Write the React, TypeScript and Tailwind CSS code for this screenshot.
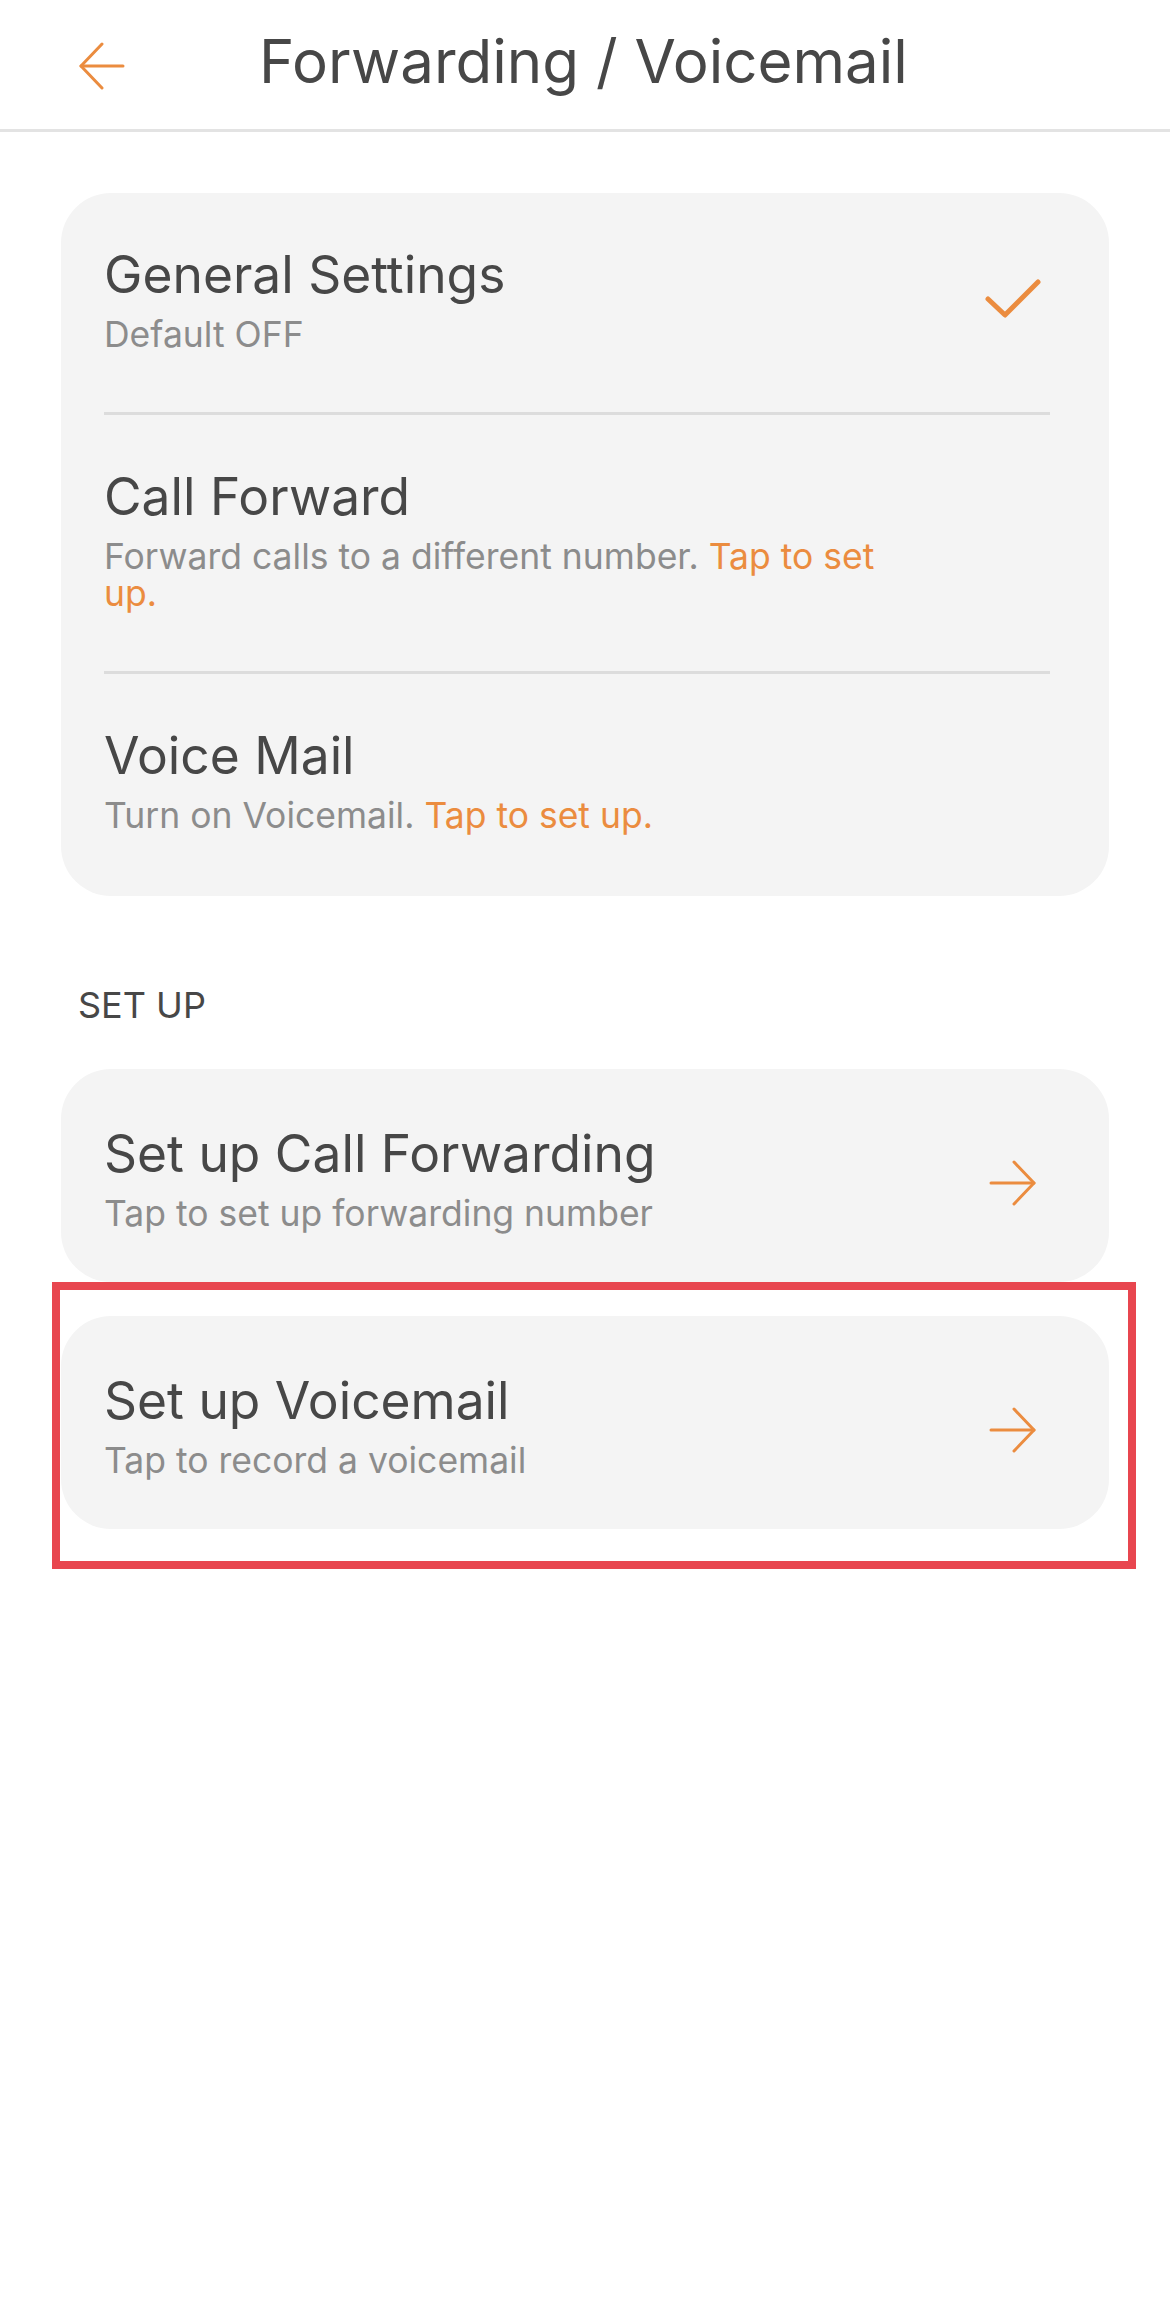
const ORANGE = '#EB8C3F';

function BackArrow() {
  return (
    <svg width="48" height="48" viewBox="0 0 48 48" fill="none" stroke={ORANGE} strokeWidth="3" strokeLinecap="round" strokeLinejoin="round">
      <path d="M3 24H45" />
      <path d="M24 2L3 24L24 46" />
    </svg>
  );
}

function ForwardArrow() {
  return (
    <svg width="48" height="46" viewBox="0 0 48 46" fill="none" stroke={ORANGE} strokeWidth="3" strokeLinecap="round" strokeLinejoin="round">
      <path d="M2 23H45" />
      <path d="M25 2L45 23L25 44" />
    </svg>
  );
}

function Check() {
  return (
    <svg width="58" height="42" viewBox="0 0 58 42" fill="none" stroke={ORANGE} strokeWidth="5" strokeLinecap="round" strokeLinejoin="round">
      <path d="M4 21L21 37L54 4" />
    </svg>
  );
}

type Row = {
  title: string;
  text: string;
  action?: string;
  checked?: boolean;
};

const settings: Row[] = [
  { title: 'General Settings', text: 'Default OFF', checked: true },
  { title: 'Call Forward', text: 'Forward calls to a different number.', action: 'Tap to set up.' },
  { title: 'Voice Mail', text: 'Turn on Voicemail.', action: 'Tap to set up.' },
];

function SettingRow({ row, last }: { row: Row; last: boolean }) {
  return (
    <div className="pl-[43px] pr-[59px]">
      <div className={`flex items-center justify-between pt-[51px] pb-[59px] ${last ? '' : 'border-b-[3px] border-[#dcdcdc]'}`}>
        <div className="max-w-[800px]">
          <div className="text-[51.5px] leading-[60px] text-[#474747]">{row.title}</div>
          <div className="mt-[12px] text-[35.5px] leading-[37px] text-[#8c8c8c]">
            {row.text}
            {row.action && <span className="text-[#EB8C3F]"> {row.action}</span>}
          </div>
        </div>
        {row.checked && (
          <div className="mr-[8px]">
            <Check />
          </div>
        )}
      </div>
    </div>
  );
}

function SetupCard({ title, text }: { title: string; text: string }) {
  return (
    <div className="flex items-center justify-between rounded-[50px] bg-[#f4f4f4] pl-[43px] pr-[72px] pt-[54px] pb-[50px]">
      <div>
        <div className="text-[51.5px] leading-[60px] text-[#474747]">{title}</div>
        <div className="mt-[12px] text-[35.5px] leading-[37px] text-[#8c8c8c]">{text}</div>
      </div>
      <div className="pt-[10px]">
        <ForwardArrow />
      </div>
    </div>
  );
}

export default function App() {
  return (
    <div className="min-h-[2322px] w-full bg-white font-['Inter',sans-serif]">
      {/* Top bar */}
      <header className="flex h-[132px] items-start border-b-[3px] border-[#e3e3e3] pl-[78px] pt-[32px]">
        <div className="mt-[10px]">
          <BackArrow />
        </div>
        <h1 className="ml-[133px] text-[60px] leading-[59px] font-normal text-[#474747]">Forwarding / Voicemail</h1>
      </header>

      <main className="px-[61px] pt-[61px]">
        {/* Toggles */}
        <div className="rounded-[50px] bg-[#f4f4f4] pb-[3px]">
          {settings.map((row, i) => (
            <SettingRow key={row.title} row={row} last={i === settings.length - 1} />
          ))}
        </div>

        <div className="mt-[89px] pl-[17px] text-[36px] leading-[40px] text-[#474747]">SET UP</div>

        <div className="mt-[44px]">
          <SetupCard title="Set up Call Forwarding" text="Tap to set up forwarding number" />
        </div>

        <div className="relative mt-[34px]">
          <SetupCard title="Set up Voicemail" text="Tap to record a voicemail" />
          <div className="pointer-events-none absolute -top-[34px] -bottom-[40px] -left-[9px] -right-[27px] border-[8px] border-[#E8464F]" />
        </div>
      </main>
    </div>
  );
}
